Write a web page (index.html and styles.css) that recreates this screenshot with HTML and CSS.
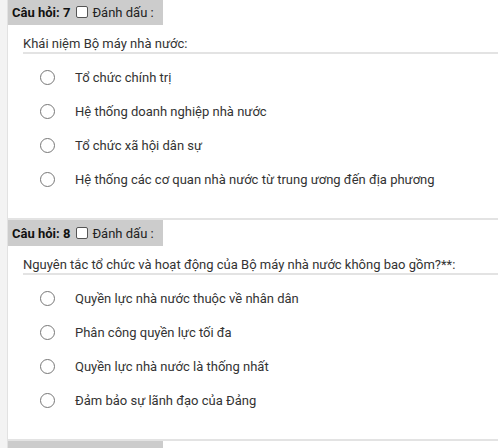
FILE: index.html
```html
<!DOCTYPE html>
<html lang="vi">
<head>
<meta charset="utf-8">
<link rel="stylesheet" href="styles.css">
</head>
<body>
<div class="page">
  <div class="card first">
    <div class="head"><b>Câu hỏi: 7</b> <span class="box"></span> Đánh dấu :</div>
    <div class="q">Khái niệm Bộ máy nhà nước:</div>
    <ul class="opts">
      <li><span class="radio"></span>Tổ chức chính trị</li>
      <li><span class="radio"></span>Hệ thống doanh nghiệp nhà nước</li>
      <li><span class="radio"></span>Tổ chức xã hội dân sự</li>
      <li><span class="radio"></span>Hệ thống các cơ quan nhà nước từ trung ương đến địa phương</li>
    </ul>
  </div>
  <div class="card">
    <div class="head"><b>Câu hỏi: 8</b> <span class="box"></span> Đánh dấu :</div>
    <div class="q">Nguyên tắc tổ chức và hoạt động của Bộ máy nhà nước không bao gồm?**:</div>
    <ul class="opts">
      <li><span class="radio"></span>Quyền lực nhà nước thuộc về nhân dân</li>
      <li><span class="radio"></span>Phân công quyền lực tối đa</li>
      <li><span class="radio"></span>Quyền lực nhà nước là thống nhất</li>
      <li><span class="radio"></span>Đảm bảo sự lãnh đạo của Đảng</li>
    </ul>
  </div>
  <div class="card">
    <div class="head"><b>Câu hỏi: 9</b> <span class="box"></span> Đánh dấu :</div>
  </div>
</div>
</body>
</html>
```
FILE: styles.css
```css
html, body { margin: 0; padding: 0; }
body {
  background: #f3f3f3;
  font-family: Roboto, "Liberation Sans", Arial, sans-serif;
  font-size: 13px;
  color: #333;
  overflow: hidden;
  height: 448px;
}
.page {
  margin-left: 7px;
  border-left: 1px solid #e2e2e2;
  background: #fff;
  min-height: 448px;
}
.card {
  border-bottom: 2px solid #e3e3e3;
  padding-bottom: 22px;
}
.card.first { margin-top: -1px; }
.head {
  display: inline-flex;
  align-items: center;
  gap: 4px;
  background: #cccccc;
  height: 26px;
  padding: 0 9px 0 4px;
  color: #222;
  font-size: 13px;
}
.head b { font-weight: bold; color: #111; margin-right: 2px; }
.box {
  display: inline-block;
  width: 12px;
  height: 12px;
  border: 1px solid #555;
  border-radius: 2px;
  background: #fff;
  box-sizing: border-box;
}
.q {
  margin: 11px 0 0 15px;
  padding-bottom: 1px;
  border-bottom: 2px solid #e3e3e3;
  line-height: 15px;
}
.opts {
  list-style: none;
  margin: 6px 0 0 0;
  padding: 0 0 0 32px;
}
.opts li {
  display: flex;
  align-items: center;
  height: 34px;
}
.radio {
  width: 15px;
  height: 15px;
  border: 1px solid #777;
  border-radius: 50%;
  box-sizing: border-box;
  margin-right: 20px;
  flex: none;
}
```
